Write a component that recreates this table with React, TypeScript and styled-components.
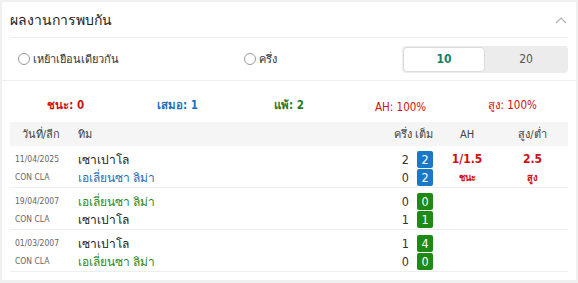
import React from "react";
import styled, { createGlobalStyle } from "styled-components";

const GlobalStyle = createGlobalStyle`
  html, body { margin: 0; padding: 0; background: #f0f0f0; }
  body { font-family: Tahoma, "DejaVu Sans Condensed", "Noto Sans", sans-serif; color: #333; }
  * { box-sizing: border-box; }
`;

const Page = styled.div`
  padding: 2px;
  width: 578px;
  height: 283px;
`;

const Card = styled.div`
  background: #fff;
  height: 278px;
`;

const Header = styled.div`
  margin: 0 8px;
  height: 36px;
  border-bottom: 1px solid #eeeeee;
  display: flex;
  align-items: center;
  justify-content: space-between;
`;

const Title = styled.h2`
  margin: 0;
  font-size: 14px;
  font-weight: 500;
  color: #222;
  padding-top: 1px;
`;

const Chevron = styled.svg`
  width: 12px;
  height: 8px;
  margin-right: 1px;
`;

const FilterRow = styled.div`
  height: 43px;
  border-bottom: 1px solid #eeeeee;
  display: flex;
  align-items: center;
  padding: 0 8px 0 16px;
`;

const RadioLabel = styled.label<{ $w: number }>`
  display: flex;
  align-items: center;
  gap: 3px;
  width: ${(p) => p.$w}px;
  font-size: 11px;
  color: #333;
`;

const RadioCircle = styled.span`
  width: 12px;
  height: 12px;
  border-radius: 50%;
  border: 1px solid #9a9a9a;
  background: #fff;
`;

const Segmented = styled.div`
  margin-left: auto;
  width: 166px;
  height: 27px;
  background: #ececec;
  border-radius: 4px;
  display: flex;
  padding: 1px;
`;

const Segment = styled.div<{ $active?: boolean }>`
  flex: 1;
  display: flex;
  align-items: center;
  justify-content: center;
  border-radius: 4px;
  font-size: 12px;
  background: ${(p) => (p.$active ? "#fff" : "transparent")};
  border: 1px solid ${(p) => (p.$active ? "#dcdcdc" : "transparent")};
  color: ${(p) => (p.$active ? "#14806a" : "#555")};
  font-weight: ${(p) => (p.$active ? 700 : 400)};
`;

const Summary = styled.div`
  margin: 0 8px;
  height: 41px;
  display: grid;
  grid-template-columns: repeat(5, 1fr);
  align-items: end;
  padding-bottom: 8px;
`;

const Stat = styled.div<{ $color: string; $bold?: boolean }>`
  text-align: center;
  font-size: 11.5px;
  color: ${(p) => p.$color};
  font-weight: ${(p) => (p.$bold ? 700 : 400)};
`;

const Table = styled.div`
  margin: 0 8px;
`;

const Cols = `
  display: grid;
  grid-template-columns: 62px 1fr 67px 60px 71px;
`;

const HeadRow = styled.div`
  ${Cols}
  height: 24px;
  align-items: center;
  background: #f5f5f5;
  font-size: 11px;
  color: #444;
`;

const HeadCell = styled.div<{ $align?: string; $pad?: string }>`
  text-align: ${(p) => p.$align || "center"};
  padding: ${(p) => p.$pad || "0"};
`;

const Row = styled.div`
  ${Cols}
  height: 42px;
  border-bottom: 1px solid #eeeeee;
  padding: 4px 0 2px;
`;

const Stack = styled.div<{ $align?: string; $pad?: string }>`
  display: flex;
  flex-direction: column;
  justify-content: space-between;
  align-items: ${(p) => p.$align || "flex-start"};
  padding: ${(p) => p.$pad || "0"};
`;

const Line = styled.div`
  height: 18px;
  display: flex;
  align-items: center;
`;

const Meta = styled.span`
  font-size: 8.5px;
  color: #666;
`;

const Team = styled.span<{ $color: string }>`
  font-size: 12px;
  color: ${(p) => p.$color};
`;

const Half = styled.span`
  font-size: 12.5px;
  color: #333;
  margin-right: 8px;
`;

const Badge = styled.span<{ $bg: string }>`
  width: 16px;
  height: 17px;
  border-radius: 2px;
  background: ${(p) => p.$bg};
  color: #fff;
  font-size: 12.5px;
  display: flex;
  align-items: center;
  justify-content: center;
`;

const Odd = styled.span<{ $small?: boolean }>`
  color: #cc1111;
  font-size: ${(p) => (p.$small ? "9.5px" : "12px")};
  font-weight: ${(p) => (p.$small ? 700 : 600)};
`;

type Side = { name: string; color: string; half: number; full: number };
type Match = {
  date: string;
  league: string;
  home: Side;
  away: Side;
  badge: string;
  ah?: [string, string];
  ou?: [string, string];
};

const SAO = "เซาเปาโล";
const ALI = "เอเลี่ยนซา ลิม่า";
const BLACK = "#222";
const BLUE = "#1c6fb8";
const GREEN = "#1f8a1f";

const matches: Match[] = [
  {
    date: "11/04/2025",
    league: "CON CLA",
    home: { name: SAO, color: BLACK, half: 2, full: 2 },
    away: { name: ALI, color: BLUE, half: 0, full: 2 },
    badge: "#1a78c6",
    ah: ["1/1.5", "ชนะ"],
    ou: ["2.5", "สูง"],
  },
  {
    date: "19/04/2007",
    league: "CON CLA",
    home: { name: ALI, color: GREEN, half: 0, full: 0 },
    away: { name: SAO, color: BLACK, half: 1, full: 1 },
    badge: "#1e8a16",
  },
  {
    date: "01/03/2007",
    league: "CON CLA",
    home: { name: SAO, color: BLACK, half: 1, full: 4 },
    away: { name: ALI, color: GREEN, half: 0, full: 0 },
    badge: "#1e8a16",
  },
];

export default function App() {
  return (
    <>
      <GlobalStyle />
      <Page>
        <Card>
          <Header>
            <Title>ผลงานการพบกัน</Title>
            <Chevron viewBox="0 0 12 8">
              <polyline points="1,7 6,2 11,7" fill="none" stroke="#b0b0b0" strokeWidth="1.2" />
            </Chevron>
          </Header>
          <FilterRow>
            <RadioLabel $w={226}>
              <RadioCircle />
              เหย้าเยือนเดียวกัน
            </RadioLabel>
            <RadioLabel $w={80}>
              <RadioCircle />
              ครึ่ง
            </RadioLabel>
            <Segmented>
              <Segment $active>10</Segment>
              <Segment>20</Segment>
            </Segmented>
          </FilterRow>
          <Summary>
            <Stat $color="#d01010" $bold>ชนะ: 0</Stat>
            <Stat $color="#1c6fb8" $bold>เสมอ: 1</Stat>
            <Stat $color="#1f7a1f" $bold>แพ้: 2</Stat>
            <Stat $color="#d01010">AH: 100%</Stat>
            <Stat $color="#d01010">สูง: 100%</Stat>
          </Summary>
          <Table>
            <HeadRow>
              <HeadCell>วันที่/ลีก</HeadCell>
              <HeadCell $align="left" $pad="0 0 0 6px">ทิม</HeadCell>
              <HeadCell $align="right" $pad="0 4px 0 0">ครึ่ง เต็ม</HeadCell>
              <HeadCell>AH</HeadCell>
              <HeadCell>สูง/ต่ำ</HeadCell>
            </HeadRow>
            {matches.map((m, i) => (
              <Row key={i}>
                <Stack $pad="0 0 0 5px">
                  <Line><Meta>{m.date}</Meta></Line>
                  <Line><Meta>{m.league}</Meta></Line>
                </Stack>
                <Stack $pad="0 0 0 6px">
                  <Line><Team $color={m.home.color}>{m.home.name}</Team></Line>
                  <Line><Team $color={m.away.color}>{m.away.name}</Team></Line>
                </Stack>
                <Stack $align="flex-end" $pad="0 4px 0 0">
                  <Line><Half>{m.home.half}</Half><Badge $bg={m.badge}>{m.home.full}</Badge></Line>
                  <Line><Half>{m.away.half}</Half><Badge $bg={m.badge}>{m.away.full}</Badge></Line>
                </Stack>
                <Stack $align="center">
                  {m.ah && (
                    <>
                      <Line><Odd>{m.ah[0]}</Odd></Line>
                      <Line><Odd $small>{m.ah[1]}</Odd></Line>
                    </>
                  )}
                </Stack>
                <Stack $align="center">
                  {m.ou && (
                    <>
                      <Line><Odd>{m.ou[0]}</Odd></Line>
                      <Line><Odd $small>{m.ou[1]}</Odd></Line>
                    </>
                  )}
                </Stack>
              </Row>
            ))}
          </Table>
        </Card>
      </Page>
    </>
  );
}
